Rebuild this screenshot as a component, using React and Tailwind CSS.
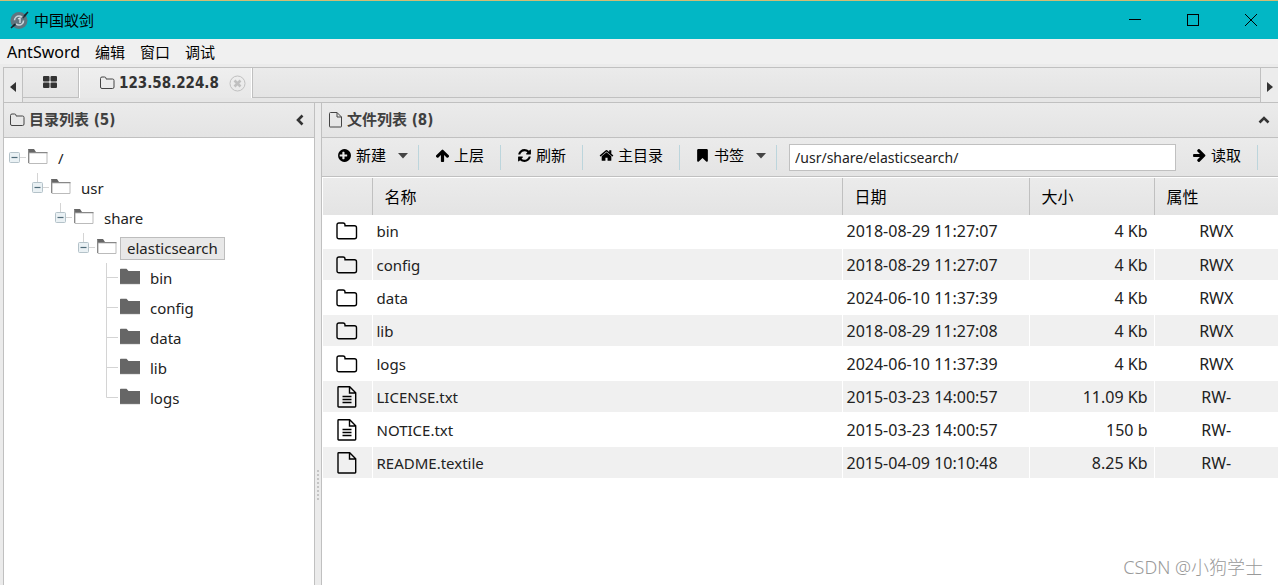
import React from "react";

const GLYPHS = {
  plus: "M1216 960v-128q0-26-19-45t-45-19h-256v-256q0-26-19-45t-45-19h-128q-26 0-45 19t-19 45v256h-256q-26 0-45 19t-19 45v128q0 26 19 45t45 19h256v256q0 26 19 45t45 19h128q26 0 45-19t19-45v-256h256q26 0 45-19t19-45zm448-64q0 209-103 385.5t-279.5 279.5-385.5 103-385.5-103-279.5-279.5-103-385.5 103-385.5 279.5-279.5 385.5-103 385.5 103 279.5 279.5 103 385.5z",
  arrow: "M1675 971q0 51-37 90l-75 75q-38 38-91 38-54 0-90-38l-294-293v704q0 52-37.5 84.5t-90.5 32.5h-128q-53 0-90.5-32.5t-37.5-84.5v-704l-294 293q-36 38-90 38t-90-38l-75-75q-38-38-38-90 0-53 38-91l651-651q35-37 90-37 54 0 91 37l651 651q37 39 37 91z",
  refresh: "M1639 1056q0 5-1 7-64 268-268 434.5t-478 166.5q-146 0-282.5-55t-243.5-157l-129 129q-19 19-45 19t-45-19-19-45v-448q0-26 19-45t45-19h448q26 0 45 19t19 45-19 45l-137 137q71 66 161 102t187 36q134 0 250-65t186-179q11-17 53-117 8-23 30-23h192q13 0 22.5 9.5t9.5 22.5zm25-800v448q0 26-19 45t-45 19h-448q-26 0-45-19t-19-45 19-45l138-138q-148-137-349-137-134 0-250 65t-186 179q-11 17-53 117-8 23-30 23h-199q-13 0-22.5-9.5t-9.5-22.5v-7q65-268 270-434.5t480-166.5q146 0 284 55.5t245 156.5l130-129q19-19 45-19t45 19 19 45z",
  home: "M1472 992v480q0 26-19 45t-45 19h-384v-384h-256v384h-384q-26 0-45-19t-19-45v-480q0-1 .5-3t.5-3l575-474 575 474q1 2 1 6zm223-69l-62 74q-8 9-21 11h-3q-13 0-21-7l-692-577-692 577q-12 8-24 7-13-2-21-11l-62-74q-8-10-7-23.5t11-21.5l719-599q32-26 76-26t76 26l244 204v-195q0-14 9-23t23-9h192q14 0 23 9t9 23v408l219 182q10 8 11 21.5t-7 23.5z",
  bookmark: "M1420 128q23 0 44 9 33 13 52.5 41t19.5 62v1289q0 34-19.5 62t-52.5 41q-19 8-44 8-48 0-83-32l-441-424-441 424q-36 33-83 33-23 0-44-9-33-13-52.5-41t-19.5-62v-1289q0-34 19.5-62t52.5-41q21-9 44-9h1048z",
};

function Glyph({ name, right }) {
  return (
    <svg viewBox="0 0 1792 1792" className="size-[15px] shrink-0" aria-hidden="true">
      <path d={GLYPHS[name]} transform={right ? "rotate(90 896 896)" : undefined} fill="#000" />
    </svg>
  );
}

function SmallFolder() {
  return (
    <svg viewBox="0 0 15 14" className="h-3.5 w-[15px] shrink-0" fill="none" stroke="#444" aria-hidden="true">
      <path d="M.5 2.5q0-1.500 1.500-1.500h2.500q1.500 0 1.500 1.500v.5h6.500q1.500 0 1.500 1.500v6.500q0 1.500-1.500 1.500h-10.500q-1.500 0-1.500-1.500z" />
    </svg>
  );
}

function SmallFile() {
  return (
    <svg viewBox="0 0 13 16" className="h-4 w-[15px] shrink-0" fill="none" stroke="#444" aria-hidden="true">
      <path d="M.5 1.500q0-1 1-1h6.500l4.500 4.500v9.500q0 .5-.5.5h-11q-.5 0-.5-.5zM8 .5v4.500h4.500" />
    </svg>
  );
}

function RowIcon({ kind }) {
  if (kind === "folder") {
    return (
      <svg viewBox="0 0 22 18" className="mx-auto block h-[18px] w-[22px]" fill="none" stroke="#000" strokeWidth="1.400" aria-label="folder">
        <path d="M1 3q0-2 2-2h4q2 0 2 2v.7h9.500q2 0 2 2v9q0 2-2 2h-15.500q-2 0-2-2z" />
      </svg>
    );
  }
  return (
    <svg viewBox="0 0 20 22" className="mx-auto block h-[22px] w-5" fill="none" stroke="#000" strokeWidth="1.400" aria-label="file">
      <path d="M1 1.500q0-.7.700-.7h11l6 6v13.500q0 .7-.7.700h-16.300q-.7 0-.7-.7zM12.500 1v6h6" />
      {kind === "text" && <path d="M5.500 10.500h9M5.500 13.500h9M5.500 16.500h9" strokeWidth="1.300" />}
    </svg>
  );
}

function TreeFolder({ open }) {
  return (
    <svg viewBox="0 0 20 18" className="mb-0.5 h-[18px] w-5 shrink-0" aria-hidden="true">
      {open ? (
        <>
          <path d="M0 1h6l2 3H0z" fill="#666" />
          <path d="M1 4v11.500h18V4.500H1" fill="#fff" stroke="#bbb" />
          <path d="M.5 1.500V15M1 4.700h18.500" stroke="#888" strokeWidth="1.200" />
        </>
      ) : (
        <>
          <path d="M0 1.500q0-.7.700-.7h5.800l2 2.200H20v13H0z" fill="#666" />
          <path d="M0 16.300h20" stroke="#ccc" strokeWidth=".6" />
        </>
      )}
    </svg>
  );
}

function Branch({ type }) {
  return (
    <svg viewBox="0 0 23 30" className="h-[30px] w-[23px] shrink-0" fill="none" stroke="#d4d4d4" aria-hidden="true">
      {type === "node" && <path d="M9.500 0v9" />}
      {(type === "node" || type === "root") && (
        <>
          <path d="M15 14.500h6" />
          <rect x="4.500" y="9.500" width="10" height="10" rx="1" fill="#eaf1f4" stroke="#b4c2c9" />
          <path d="M6.500 14.500h6" stroke="#4f6b78" strokeWidth="1.200" />
        </>
      )}
      {type === "leaf" && <path d="M9.500 0v30M9.500 14.500H21" />}
      {type === "last" && <path d="M9.500 0v14.500H21" />}
    </svg>
  );
}

const TREE = {
  name: "/",
  children: [
    {
      name: "usr",
      children: [
        {
          name: "share",
          children: [
            {
              name: "elasticsearch",
              selected: true,
              children: [{ name: "bin" }, { name: "config" }, { name: "data" }, { name: "lib" }, { name: "logs" }],
            },
          ],
        },
      ],
    },
  ],
};

function TreeNode({ node, root, last }) {
  const open = Boolean(node.children);
  const type = root ? "root" : open ? "node" : last ? "last" : "leaf";
  return (
    <li>
      <div className="flex h-[30px] items-center">
        <Branch type={type} />
        <TreeFolder open={open} />
        <button
          className={
            node.selected
              ? "ml-[3px] h-[23px] border border-[#bdbdbd] bg-[#e8e8e8] px-1.5 leading-[21px]"
              : "ml-[3px] h-[23px] border border-transparent px-1.5 leading-[21px]"
          }
        >
          {node.name}
        </button>
      </div>
      {open && (
        <ul className="pl-[23px]">
          {node.children.map((c, i) => (
            <TreeNode key={c.name} node={c} last={i === node.children.length - 1} />
          ))}
        </ul>
      )}
    </li>
  );
}

const FILES = [
  ["folder", "bin", "2018-08-29 11:27:07", "4 Kb", "RWX"],
  ["folder", "config", "2018-08-29 11:27:07", "4 Kb", "RWX"],
  ["folder", "data", "2024-06-10 11:37:39", "4 Kb", "RWX"],
  ["folder", "lib", "2018-08-29 11:27:08", "4 Kb", "RWX"],
  ["folder", "logs", "2024-06-10 11:37:39", "4 Kb", "RWX"],
  ["text", "LICENSE.txt", "2015-03-23 14:00:57", "11.09 Kb", "RW-"],
  ["text", "NOTICE.txt", "2015-03-23 14:00:57", "150 b", "RW-"],
  ["file", "README.textile", "2015-04-09 10:10:48", "8.25 Kb", "RW-"],
];

function Tool({ icon, label, menu, right }) {
  return (
    <>
      <button
        className={
          menu
            ? "flex h-8 shrink-0 items-center gap-1 pb-1 pl-[15px] pr-2.5 text-[15px] text-black"
            : "flex h-8 shrink-0 items-center gap-1 px-4 pb-1 text-[15px] text-black"
        }
      >
        <Glyph name={icon} right={right} />
        <span>{label}</span>
        {menu && (
          <svg viewBox="0 0 10 6" className="ml-2 mt-0.5 h-1.5 w-2.5" aria-hidden="true">
            <path d="M0 0h10L5 5.500z" fill="#444" />
          </svg>
        )}
      </button>
      <span className="h-[25px] w-px shrink-0 bg-[#bcd5dc]" />
    </>
  );
}

function Titlebar() {
  return (
    <header className="flex h-[39px] shrink-0 items-center border-t border-[#d3bc74] bg-[#02b7c5] pl-2.5 text-black">
      <svg viewBox="0 0 19 19" className="size-[19px]" aria-hidden="true">
        <circle cx="9" cy="9.500" r="8.500" fill="#607580" />
        <path d="M1 17L18 1l-2 4L5 15z" fill="#26343d" />
        <circle cx="9" cy="9.500" r="4.500" fill="#607580" stroke="#c7d5db" strokeWidth="1.600" strokeDasharray="10 4" />
        <path d="M8 8l2-1v5" fill="none" stroke="#dce6ea" strokeWidth="1.300" />
        <path d="M1 17l4-4M14 5l4-4" stroke="#17232b" strokeWidth="1.500" />
      </svg>
      <h1 className="ml-[5px] text-[15px]">中国蚁剑</h1>
      <div className="ml-auto flex h-full items-center">
        <button aria-label="Minimize" className="flex h-full w-[54px] items-center justify-center">
          <svg viewBox="0 0 12 12" className="size-3"><path d="M0 5.500h12" stroke="#000" /></svg>
        </button>
        <button aria-label="Maximize" className="flex h-full w-[62px] items-center justify-center">
          <svg viewBox="0 0 12 12" className="size-3"><rect x=".5" y=".5" width="11" height="11" fill="none" stroke="#000" /></svg>
        </button>
        <button aria-label="Close" className="flex h-full w-[54px] items-center justify-center">
          <svg viewBox="0 0 12 12" className="size-3"><path d="M0 0l12 12M12 0L0 12" stroke="#000" /></svg>
        </button>
      </div>
    </header>
  );
}

function Tabs() {
  return (
    <div className="ml-[3px] flex h-9 shrink-0 border-y border-l border-[#c0c0c0] bg-[#ebebeb]">
      <button aria-label="Scroll left" className="flex w-[19px] items-center justify-center border-r border-[#c0c0c0] pt-1">
        <svg viewBox="0 0 6 10" className="h-2.5 w-1.5"><path d="M6 0v10L0 5z" fill="#333" /></svg>
      </button>
      <div className="flex min-w-0 flex-1 bg-[#e6e6e6]">
        <button aria-label="Home" className="flex h-[30px] w-14 items-center justify-center border-b border-r border-[#c0c0c0] bg-linear-to-b from-[#ebebeb] to-[#e4e4e4] pb-px pr-0.5">
          <svg viewBox="0 0 14 12" className="h-3 w-3.5" fill="#333">
            <rect width="6.500" height="5.500" rx="1" />
            <rect x="7.500" width="6.500" height="5.500" rx="1" />
            <rect y="6.500" width="6.500" height="5.500" rx="1" />
            <rect x="7.500" y="6.500" width="6.500" height="5.500" rx="1" />
          </svg>
        </button>
        <div className="flex h-[30px] items-center border-x border-white bg-linear-to-b from-[#efefef] to-[#e8e8e8] pl-5 pr-[5px]">
          <SmallFolder />
          <button className="ml-1 font-['DejaVu_Sans_Condensed','Noto_Sans',sans-serif] text-[15px] font-bold text-[#333]">123.58.224.8</button>
          <button aria-label="Close tab" className="ml-2.5">
            <svg viewBox="0 0 17 17" className="size-[17px]" fill="none" stroke="#c0c0c0">
              <circle cx="8.500" cy="8.500" r="7.500" />
              <path d="M5.500 5.500l6 6M11.500 5.500l-6 6" strokeWidth="2.600" />
            </svg>
          </button>
        </div>
        <div className="h-[30px] flex-1 border-b border-l border-[#c0c0c0] bg-linear-to-b from-[#ebebeb] to-[#e4e4e4]" />
      </div>
      <button aria-label="Scroll right" className="flex w-[18px] items-center justify-center border-l border-[#c0c0c0] bg-[#ececec] pt-1">
        <svg viewBox="0 0 6 10" className="h-2.5 w-1.5"><path d="M0 0v10l6-5z" fill="#333" /></svg>
      </button>
    </div>
  );
}

function PanelHead({ icon, title, d }) {
  return (
    <div className="flex h-[35px] shrink-0 items-center gap-1 border-b border-[#c0c0c0] bg-linear-to-b from-[#ebebeb] to-[#e4e4e4] pl-1.5">
      {icon}
      <h2 className="font-['DejaVu_Sans_Condensed','Noto_Sans_CJK_SC',sans-serif] text-[15px] font-bold text-[#404040]">{title}</h2>
      <button aria-label="Collapse" className="ml-auto flex h-full w-[29px] items-center justify-center">
        <svg viewBox="0 0 12 12" className="size-3" fill="none" stroke="#333" strokeWidth="2.600">
          <path d={d} />
        </svg>
      </button>
    </div>
  );
}

export default function App() {
  return (
    <div className="relative flex min-h-screen flex-col bg-[#ebebeb] font-['Noto_Sans','Noto_Sans_CJK_SC',sans-serif] text-[15px] leading-5 text-[#222]">
      <Titlebar />
      <nav className="flex h-[25px] shrink-0 items-center gap-[15px] bg-[#f0f0f0] pl-[7px] text-black">
        <button className="text-[16px]">AntSword</button>
        <button>编辑</button>
        <button>窗口</button>
        <button>调试</button>
      </nav>
      <div className="h-[3px] shrink-0" />
      <Tabs />
      <main className="flex flex-1 pl-[3px]">
        <section className="flex w-[312px] shrink-0 flex-col border-x border-[#c0c0c0] bg-white">
          <PanelHead icon={<SmallFolder />} title="目录列表 (5)" d="M8.500 1.500L4 6l4.500 4.500" />
          <ul className="pl-px pt-[5px]">
            <TreeNode node={TREE} root />
          </ul>
        </section>
        <div className="flex w-1.5 shrink-0 justify-center pt-[367px]">
          <div className="h-[30px] border-l-2 border-dotted border-[#c4c4c4]" />
        </div>
        <section className="flex min-w-0 flex-1 flex-col border-l border-[#c0c0c0] bg-white">
          <PanelHead icon={<SmallFile />} title="文件列表 (8)" d="M1.500 8.500L6 4l4.500 4.500" />
          <div className="flex h-[39px] shrink-0 items-center border-b border-[#c0c0c0] bg-linear-to-b from-[#ebebeb] to-[#e4e4e4]">
            <Tool icon="plus" label="新建" menu />
            <Tool icon="arrow" label="上层" />
            <Tool icon="refresh" label="刷新" />
            <Tool icon="home" label="主目录" />
            <Tool icon="bookmark" label="书签" menu />
            <input
              aria-label="Path"
              defaultValue="/usr/share/elasticsearch/"
              className="ml-3 h-[27px] min-w-0 flex-1 border border-[#c0c0c0] bg-white px-[5px] text-[14px] outline-none"
            />
            <Tool icon="arrow" label="读取" right />
            <span className="w-5 shrink-0" />
          </div>
          <div className="pl-px pt-px">
            <table className="w-full table-fixed border-collapse">
              <colgroup>
                <col className="w-[49px]" />
                <col />
                <col className="w-[187px]" />
                <col className="w-[125px]" />
                <col className="w-[124px]" />
              </colgroup>
              <thead>
                <tr className="h-[37px] bg-linear-to-b from-[#ebebeb] to-[#e4e4e4] text-left text-[16px] text-black">
                  <th className="border-r border-[#c0c0c0]" aria-label="类型" />
                  <th className="border-r border-[#c0c0c0] pl-3 font-normal">名称</th>
                  <th className="border-r border-[#c0c0c0] pl-3 font-normal">日期</th>
                  <th className="border-r border-[#c0c0c0] pl-3 font-normal">大小</th>
                  <th className="pl-3 font-normal">属性</th>
                </tr>
              </thead>
              <tbody className="text-[16px]">
                {FILES.map(([kind, name, date, size, mode]) => (
                  <tr key={name} className="h-[33px] border-b-2 border-white even:bg-[#f0f0f0]">
                    <td className="border-r border-white"><RowIcon kind={kind} /></td>
                    <td className="border-r border-white pl-1 text-[15px]">{name}</td>
                    <td className="border-r border-white pl-1">{date}</td>
                    <td className="border-r border-white pr-1.5 text-right">{size}</td>
                    <td className="text-center">{mode}</td>
                  </tr>
                ))}
              </tbody>
            </table>
          </div>
        </section>
      </main>
      <p className="absolute bottom-2 right-[15px] text-[18px] font-light text-[#999]">CSDN @小狗学士</p>
    </div>
  );
}
